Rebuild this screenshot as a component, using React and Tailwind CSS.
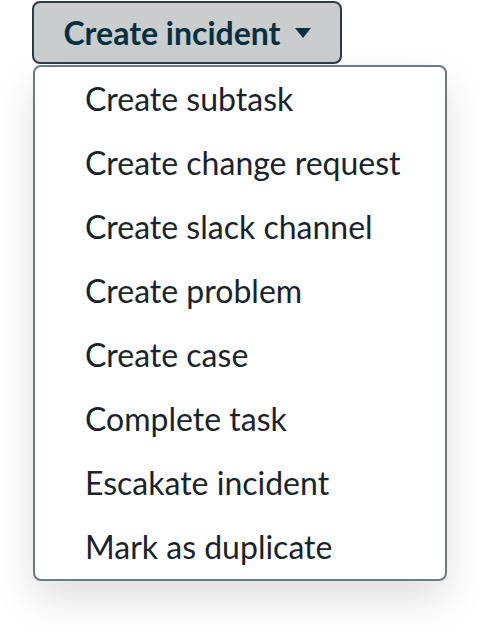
const ITEMS = [
  'Create subtask',
  'Create change request',
  'Create slack channel',
  'Create problem',
  'Create case',
  'Complete task',
  'Escakate incident',
  'Mark as duplicate',
]

export default function App() {
  return (
    <div className="w-[480px] h-[634px] bg-white font-['Lato','Liberation_Sans',sans-serif] relative">
      <div className="pl-8 pt-px">
        <button className="flex items-center justify-center gap-[14px] h-[63px] w-[310px] rounded-lg border-2 border-[#2e3b40] bg-[#c9cdce] text-[#06303f] text-[32px] font-bold leading-none">
          Create incident
          <svg width="16" height="10" viewBox="0 0 16 10">
            <path d="M0 0 H16 L8 10 Z" fill="#06303f" />
          </svg>
        </button>
      </div>
      <div className="ml-[33px] mt-px w-[414px] rounded-lg border-2 border-[#6e7a82] bg-white shadow-[0_18px_40px_rgba(0,0,0,0.13)]">
        {ITEMS.map((item) => (
          <div
            key={item}
            className="h-16 flex items-center pl-[50px] text-[32px] text-[#1a2329] leading-none"
          >
            {item}
          </div>
        ))}
      </div>
    </div>
  )
}
